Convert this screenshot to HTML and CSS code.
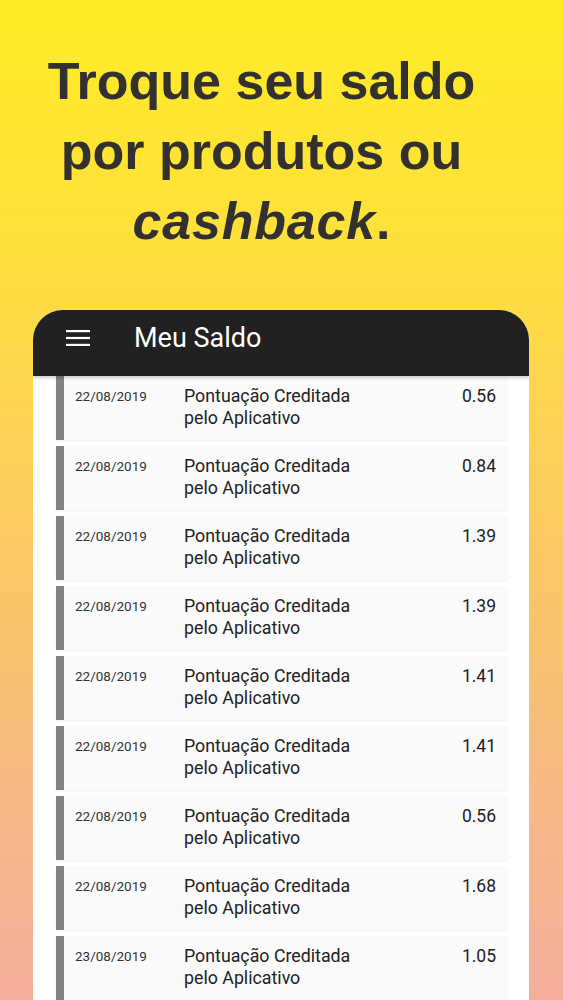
FILE: index.html
```html
<!DOCTYPE html>
<html lang="pt-BR">
<head>
<meta charset="utf-8">
<title>Meu Saldo</title>
<link rel="stylesheet" href="styles.css">
</head>
<body>
<div class="screen">
  <h1 class="hero">Troque seu saldo<br>por produtos ou<br><em>cashback</em>.</h1>
  <div class="phone">
    <div class="appbar">
      <svg class="menu" width="24" height="18" viewBox="0 0 24 18"><rect x="0" y="1" width="24" height="2.2" fill="#fff"/><rect x="0" y="7.9" width="24" height="2.2" fill="#fff"/><rect x="0" y="14.8" width="24" height="2.2" fill="#fff"/></svg>
      <span class="title">Meu Saldo</span>
    </div>
    <div class="list">
      <div class="row"><span class="date">22/08/2019</span><span class="desc">Pontuação Creditada<br>pelo Aplicativo</span><span class="val">0.56</span></div>
      <div class="row"><span class="date">22/08/2019</span><span class="desc">Pontuação Creditada<br>pelo Aplicativo</span><span class="val">0.84</span></div>
      <div class="row"><span class="date">22/08/2019</span><span class="desc">Pontuação Creditada<br>pelo Aplicativo</span><span class="val">1.39</span></div>
      <div class="row"><span class="date">22/08/2019</span><span class="desc">Pontuação Creditada<br>pelo Aplicativo</span><span class="val">1.39</span></div>
      <div class="row"><span class="date">22/08/2019</span><span class="desc">Pontuação Creditada<br>pelo Aplicativo</span><span class="val">1.41</span></div>
      <div class="row"><span class="date">22/08/2019</span><span class="desc">Pontuação Creditada<br>pelo Aplicativo</span><span class="val">1.41</span></div>
      <div class="row"><span class="date">22/08/2019</span><span class="desc">Pontuação Creditada<br>pelo Aplicativo</span><span class="val">0.56</span></div>
      <div class="row"><span class="date">22/08/2019</span><span class="desc">Pontuação Creditada<br>pelo Aplicativo</span><span class="val">1.68</span></div>
      <div class="row"><span class="date">23/08/2019</span><span class="desc">Pontuação Creditada<br>pelo Aplicativo</span><span class="val">1.05</span></div>
    </div>
  </div>
</div>
</body>
</html>
```
FILE: styles.css
```css
html, body {
  margin: 0;
  padding: 0;
}
.screen {
  width: 563px;
  height: 1000px;
  overflow: hidden;
  background: linear-gradient(180deg, #ffec25 0%, #fee03c 25%, #fcd058 45%, #fac46c 62%, #f8b88a 82%, #f6ae9c 100%);
  display: flex;
  flex-direction: column;
}
.hero {
  margin: 0;
  flex: none;
  padding: 46px 40px 0 0;
  height: 310px;
  box-sizing: border-box;
  text-align: center;
  font-family: "Liberation Sans", sans-serif;
  font-weight: 700;
  font-size: 52px;
  line-height: 70px;
  letter-spacing: 0;
  color: #333130;
}
.hero em {
  font-style: italic;
  letter-spacing: 0.8px;
}
.phone {
  margin: 0 34px 0 33px;
  flex: 1;
  background: #fff;
  border-radius: 30px 30px 0 0;
  overflow: hidden;
  display: flex;
  flex-direction: column;
}
.appbar {
  height: 66px;
  flex: none;
  box-sizing: border-box;
  padding-bottom: 10px;
  background: #212121;
  display: flex;
  align-items: center;
  padding-left: 33px;
  gap: 44px;
  box-shadow: 0 2px 3px rgba(0,0,0,0.2);
  position: relative;
  z-index: 1;
}
.menu {
  display: block;
}
.title {
  font-family: Roboto, sans-serif;
  font-size: 27px;
  color: #fff;
}
.list {
  padding: 0 22px 0 23px;
  display: flex;
  flex-direction: column;
  gap: 6px;
}
.row {
  height: 64px;
  flex: none;
  box-sizing: border-box;
  border-left: 8px solid #828282;
  background: #fafafb;
  box-shadow: 0 1px 2px rgba(0,0,0,0.07);
  display: flex;
  align-items: flex-start;
  padding: 9px 11px 0 11px;
  font-family: Roboto, sans-serif;
  color: #222;
}
.date {
  width: 109px;
  flex: none;
  font-size: 13.5px;
  line-height: 22px;
  color: #333;
}
.desc {
  flex: 1;
  font-size: 17.8px;
  line-height: 22px;
}
.val {
  font-size: 17.5px;
  line-height: 22px;
}
```
